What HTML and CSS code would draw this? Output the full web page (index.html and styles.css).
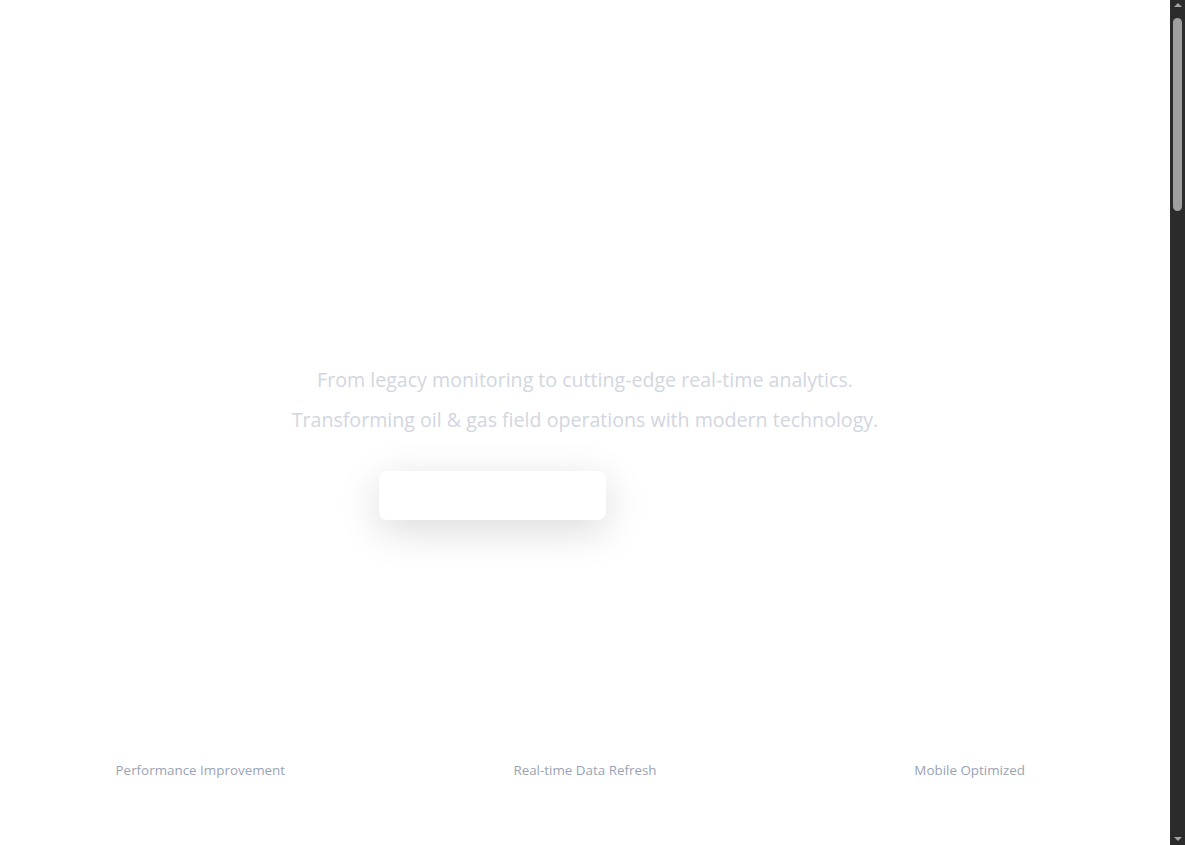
FILE: index.html
```html
<!DOCTYPE html>
<html lang="en">
<head>
<meta charset="utf-8">
<title>Field Operations</title>
<link rel="stylesheet" href="styles.css">
</head>
<body>
<div class="page">
<section class="hero">
  <div class="hero-inner">
    <h1 class="hero-title">Next-Generation Field Monitoring</h1>
    <p class="hero-sub">From legacy monitoring to cutting-edge real-time analytics.<br>Transforming oil &amp; gas field operations with modern technology.</p>
    <div class="hero-actions">
      <a class="btn btn-primary" href="#demo">Explore the Platform</a>
      <a class="btn btn-ghost" href="#features">Learn More</a>
    </div>
    <div class="stats">
      <div class="stat">
        <div class="stat-value">10x</div>
        <div class="stat-label">Performance Improvement</div>
      </div>
      <div class="stat">
        <div class="stat-value">1s</div>
        <div class="stat-label">Real-time Data Refresh</div>
      </div>
      <div class="stat">
        <div class="stat-value">100%</div>
        <div class="stat-label">Mobile Optimized</div>
      </div>
    </div>
  </div>
</section>
<main class="rest" id="features"></main>
</div>
<div class="scrollbar" aria-hidden="true">
  <span class="sb-arrow sb-up"></span>
  <span class="sb-track"><span class="sb-thumb"></span></span>
  <span class="sb-arrow sb-down"></span>
</div>
</body>
</html>
```
FILE: styles.css
```css
html, body {
  background: #ffffff;
}
body {
  margin: 0;
  font-family: "Open Sans", "Noto Sans", sans-serif;
  color: #ffffff;
}
.page {
  margin-right: 15px;
}
.hero {
  padding: 0 24px;
}
.hero-inner {
  padding-top: 269px;
  text-align: center;
}
.hero-title {
  margin: 0 0 24px;
  font-size: 56px;
  line-height: 67px;
  font-weight: 700;
  color: #ffffff;
}
.hero-sub {
  margin: 0;
  font-size: 19.6px;
  line-height: 40px;
  color: #d2d6df;
}
.hero-actions {
  margin-top: 31px;
  display: flex;
  justify-content: center;
  gap: 16px;
}
.btn {
  display: inline-flex;
  align-items: center;
  justify-content: center;
  height: 49px;
  padding: 0 32px;
  border-radius: 8px;
  font-size: 16px;
  font-weight: 600;
  text-decoration: none;
  box-sizing: border-box;
}
.btn-primary {
  width: 227px;
  background: #ffffff;
  color: #ffffff;
  box-shadow: 0 10px 40px rgba(0, 0, 0, 0.15);
}
.btn-ghost {
  width: 169px;
  color: #ffffff;
  background: transparent;
}
.stats {
  margin-top: 189px;
  display: grid;
  grid-template-columns: repeat(3, 1fr);
  gap: 32px;
}
.stat-value {
  font-size: 36px;
  line-height: 43px;
  font-weight: 700;
  color: #ffffff;
}
.stat-label {
  margin-top: 8px;
  font-size: 13.4px;
  line-height: 20px;
  color: #9aa3b3;
}
.rest {
  height: 2700px;
}
.scrollbar {
  position: fixed;
  top: 0;
  right: 0;
  width: 15px;
  height: 100vh;
  background: #2b2b2b;
  display: flex;
  flex-direction: column;
  align-items: center;
}
.sb-arrow {
  display: flex;
  align-items: center;
  justify-content: center;
  height: 17px;
  width: 15px;
}
.sb-arrow::before {
  content: "";
  width: 0;
  height: 0;
  border-left: 4px solid transparent;
  border-right: 4px solid transparent;
}
.sb-up::before {
  border-bottom: 4px solid #a3a3a3;
  margin-bottom: 7px;
}
.sb-down::before {
  border-top: 4px solid #a3a3a3;
  margin-top: 5px;
}
.sb-track {
  flex: 1;
  display: flex;
  flex-direction: column;
  align-items: center;
  padding-top: 1px;
}
.sb-thumb {
  width: 9px;
  height: 193px;
  border-radius: 5px;
  background: #9f9f9f;
}
```
